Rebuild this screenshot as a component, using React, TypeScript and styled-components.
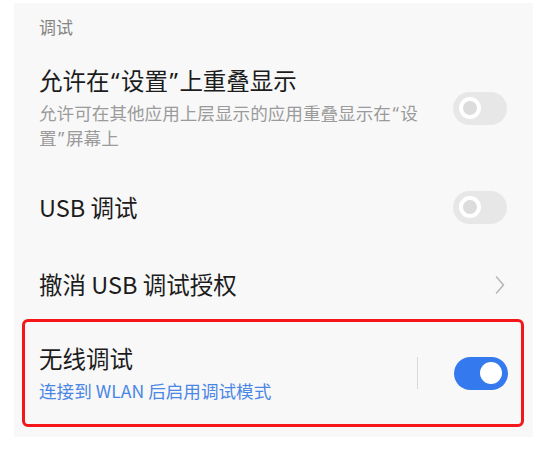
import React from "react";
import styled, { createGlobalStyle } from "styled-components";

const Global = createGlobalStyle`
  html, body { margin: 0; padding: 0; background: #ffffff; }
  body { font-family: "Noto Sans CJK SC", "Noto Sans", sans-serif; }
`;

const Panel = styled.div`
  margin: 3px 0 0 14px;
  width: 519px;
  height: 434px;
  background: #f8f8f8;
  display: flex;
  flex-direction: column;
`;

const Header = styled.div`
  height: 47px;
  padding-left: 25px;
  display: flex;
  align-items: center;
  font-size: 17px;
  color: #858585;
`;

const Row = styled.div<{ $h: number; $pt?: number }>`
  height: ${(p) => p.$h}px;
  padding: ${(p) => p.$pt ?? 0}px 26px 0 25px;
  display: flex;
  align-items: center;
  justify-content: space-between;
  box-sizing: border-box;
`;

const Highlight = styled.div`
  margin: 0 9px 0 8px;
  height: 108px;
  border: 3px solid #f5161a;
  border-radius: 6px;
  box-sizing: border-box;
  padding: 0 13px 0 14px;
  display: flex;
  align-items: center;
  justify-content: space-between;
`;

const Texts = styled.div`
  display: flex;
  flex-direction: column;
`;

const Title = styled.div`
  font-size: 23.5px;
  line-height: 29px;
  color: #1c1c1c;
`;

const Sub = styled.div<{ $blue?: boolean }>`
  font-size: 17.6px;
  line-height: 25px;
  margin-top: 5px;
  white-space: nowrap;
  color: ${(p) => (p.$blue ? "#4a86e6" : "#9b9b9b")};
`;

const Quote = styled.span`
  font-family: "Noto Sans", sans-serif;
  line-height: 1;
  margin: 0 1.5px;
`;

const Right = styled.div`
  display: flex;
  align-items: center;
`;

const Divider = styled.div`
  width: 1.5px;
  height: 32px;
  background: #d9d9d9;
  margin-right: 36px;
`;

const Track = styled.div<{ $on?: boolean }>`
  width: 54px;
  height: 33px;
  border-radius: 17px;
  background: ${(p) => (p.$on ? "#3579ee" : "#e7e7e7")};
  display: flex;
  align-items: center;
  justify-content: ${(p) => (p.$on ? "flex-end" : "flex-start")};
  padding: 0 6px;
  box-sizing: border-box;
`;

const Knob = styled.div<{ $on?: boolean }>`
  width: 22px;
  height: 22px;
  border-radius: 50%;
  box-sizing: border-box;
  background: ${(p) => (p.$on ? "#ffffff" : "#dcdcdc")};
  border: ${(p) => (p.$on ? "none" : "4px solid #ffffff")};
`;

const Toggle = ({ on }: { on?: boolean }) => (
  <Track $on={on}>
    <Knob $on={on} />
  </Track>
);

const Chevron = () => (
  <svg width="10" height="20" viewBox="0 0 10 20" style={{ marginRight: 2 }}>
    <path d="M1.5 2 L8.5 10 L1.5 18" fill="none" stroke="#b8b8b8" strokeWidth="1.6" strokeLinecap="round" strokeLinejoin="round" />
  </svg>
);

export default function App() {
  return (
    <>
      <Global />
      <Panel>
        <Header>调试</Header>
        <Row $h={114} $pt={2}>
          <Texts>
            <Title>
              允许在<Quote>“</Quote>设置<Quote>”</Quote>上重叠显示
            </Title>
            <Sub>
              允许可在其他应用上层显示的应用重叠显示在<Quote>“</Quote>设
              <br />
              置<Quote>”</Quote>屏幕上
            </Sub>
          </Texts>
          <Toggle />
        </Row>
        <Row $h={86}>
          <Title>USB 调试</Title>
          <Toggle />
        </Row>
        <Row $h={69}>
          <Title>撤消 USB 调试授权</Title>
          <Chevron />
        </Row>
        <Highlight>
          <Texts>
            <Title>无线调试</Title>
            <Sub $blue>连接到 WLAN 后启用调试模式</Sub>
          </Texts>
          <Right>
            <Divider />
            <Toggle on />
          </Right>
        </Highlight>
      </Panel>
    </>
  );
}
